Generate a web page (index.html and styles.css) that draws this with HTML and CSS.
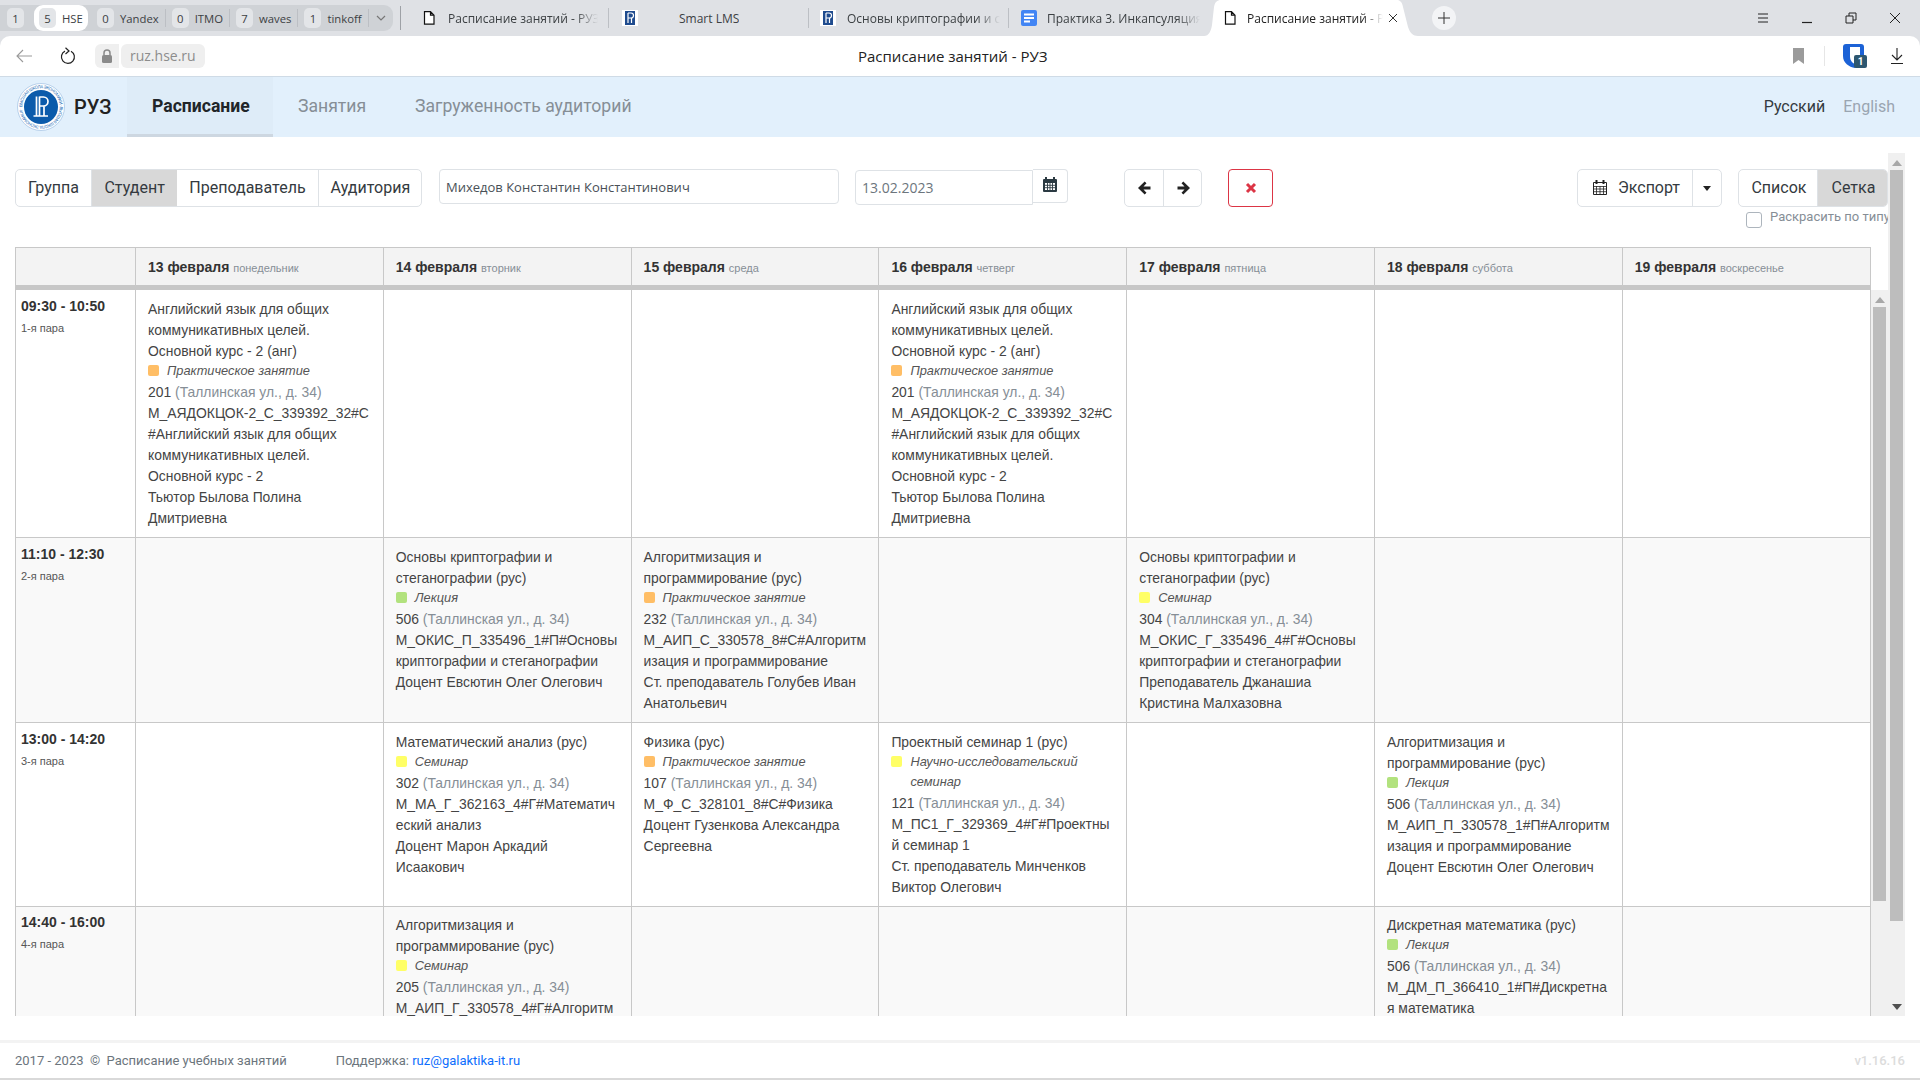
FILE: index.html
```html
<!DOCTYPE html>
<html lang="ru">
<head>
<meta charset="utf-8">
<title>Расписание занятий - РУЗ</title>
<link rel="stylesheet" href="styles.css">
</head>
<body>
<div class="tabstrip">
  <div class="groups">
    <span class="group g0"><b>1</b></span>
    <span class="group active"><b>5</b>HSE</span>
    <span class="group sep"><b>0</b>Yandex</span>
    <span class="group sep"><b>0</b>ITMO</span>
    <span class="group sep"><b>7</b>waves</span>
    <span class="group sep"><b>1</b>tinkoff</span>
    <svg class="chev" width="10" height="6" viewBox="0 0 10 6"><path d="M1 1l4 4 4-4" fill="none" stroke="#777" stroke-width="1.2"/></svg>
  </div>
  <i class="strip-sep"></i>
  <div class="tab t1">
    <svg class="page" width="12" height="14" viewBox="0 0 12 14"><path d="M1.5 .7h6l3.5 3.5v9H1.500zM7.500 .7v3.500H11" fill="#fff" stroke="#111" stroke-width="1.200"/></svg>
    <span class="title">Расписание занятий - РУЗ</span>
  </div>
  <div class="tab t2">
    <svg class="fav" width="16" height="16" viewBox="0 0 16 16"><rect width="16" height="16" fill="#fff"/><rect x="3" y="1" width="10" height="14" fill="#1f4b8e"/><path d="M6 3v10M6 3h3a2 2 0 010 5H6M9.500 8v5" fill="none" stroke="#fff" stroke-width="1.200"/></svg>
    <span class="title lms">Smart LMS</span>
  </div>
  <div class="tab t3">
    <svg class="fav" width="16" height="16" viewBox="0 0 16 16"><rect width="16" height="16" fill="#fff"/><rect x="3" y="1" width="10" height="14" fill="#1f4b8e"/><path d="M6 3v10M6 3h3a2 2 0 010 5H6M9.500 8v5" fill="none" stroke="#fff" stroke-width="1.200"/></svg>
    <span class="title">Основы криптографии и стеганографии</span>
  </div>
  <div class="tab t4">
    <svg class="fav" width="16" height="16" viewBox="0 0 16 16"><rect width="16" height="16" rx="2" fill="#4285f4"/><path d="M3 4.500h10M3 8h10M3 11.500h6" stroke="#fff" stroke-width="1.800"/></svg>
    <span class="title">Практика 3. Инкапсуляция классов</span>
  </div>
  <div class="tab current">
    <svg class="page" width="12" height="14" viewBox="0 0 12 14"><path d="M1.500 .7h6l3.500 3.500v9H1.500zM7.500 .7v3.500H11" fill="#fff" stroke="#111" stroke-width="1.200"/></svg>
    <span class="title">Расписание занятий - РУЗ</span>
    <svg class="x" width="10" height="10" viewBox="0 0 10 10"><path d="M1 1l8 8M9 1l-8 8" stroke="#333" stroke-width="1"/></svg>
  </div>
  <span class="plus"><svg width="12" height="12" viewBox="0 0 12 12"><path d="M6 0v12M0 6h12" stroke="#333" stroke-width="1"/></svg></span>
  <div class="winctl">
    <svg width="12" height="12" viewBox="0 0 12 12"><path d="M1 2h10M1 6h10M1 10h10" stroke="#222" stroke-width="1"/></svg>
    <svg width="12" height="12" viewBox="0 0 12 12"><path d="M1 10.500h10" stroke="#222" stroke-width="1.200"/></svg>
    <svg width="12" height="12" viewBox="0 0 12 12"><path d="M1 4h7v7H1zM4 4V1h7v7H8" fill="none" stroke="#222" stroke-width="1"/></svg>
    <svg width="12" height="12" viewBox="0 0 12 12"><path d="M1 1l10 10M11 1L1 11" stroke="#222" stroke-width="1"/></svg>
  </div>
</div>

<div class="addrbar">
  <svg class="back" width="16" height="14" viewBox="0 0 16 14"><path d="M16 7H1M7 1L1 7l6 6" fill="none" stroke="#9a9a9a" stroke-width="1.100"/></svg>
  <svg class="reload" width="16" height="18" viewBox="0 0 16 18"><path d="M11 4.200A6.500 6.500 0 1 1 5 4.100" fill="none" stroke="#222" stroke-width="1.200"/><path d="M5.500 .8l3.500 3.200-3.500 3" fill="none" stroke="#222" stroke-width="1.200"/></svg>
  <span class="lock"><svg width="12" height="14" viewBox="0 0 12 14"><path d="M3 6V4a3 3 0 016 0v2" fill="none" stroke="#8a8a8a" stroke-width="1.500"/><rect x="1" y="6" width="10" height="8" rx="1.500" fill="#8a8a8a"/></svg></span>
  <span class="url">ruz.hse.ru</span>
  <span class="pagetitle">Расписание занятий - РУЗ</span>
  <svg class="bookmark" width="11" height="16" viewBox="0 0 11 16"><path d="M0 0h11v16l-5.500-4L0 16z" fill="#9b9b9b"/></svg>
  <i class="bar-sep"></i>
  <span class="shield">
    <svg width="24" height="24" viewBox="0 0 24 24"><path d="M3 0h15a3 3 0 013 3v10c0 5-5 9-9 11C6 23 0 19 0 12V3a3 3 0 013-3z" fill="#1c62d6"/><path d="M7 3h10v10c0 3-2 5-5 7-3-1-5-4-5-7z" fill="#fff"/></svg>
    <em>1</em>
  </span>
  <svg class="download" width="14" height="16" viewBox="0 0 14 16"><path d="M7 0v12M2 7l5 5 5-5M1 15.500h12" fill="none" stroke="#222" stroke-width="1.100"/></svg>
</div>

<nav class="appnav">
  <a class="brand">
    <svg class="logo" width="48" height="48" viewBox="0 0 48 48">
      <defs><path id="ring" d="M24 24m-18.800 0a18.800 18.800 0 1 1 37.600 0a18.800 18.800 0 1 1-37.600 0"/></defs>
      <circle cx="24" cy="24" r="23.500" fill="#fff" stroke="#a9c6e6" stroke-width=".8"/>
      <text class="ringtext" textLength="116"><textPath href="#ring" textLength="116">ВЫСШАЯ ШКОЛА ЭКОНОМИКИ · ВЫСШАЯ ШКОЛА ЭКОНОМИКИ ·</textPath></text>
      <circle cx="24" cy="24" r="17" fill="#0b5bab"/>
      <path d="M19.500 13.500v19M22.500 13.500v19M22.500 14h4a4.500 4.500 0 010 9h-4M27 23v9.500M16.500 33h14.500" fill="none" stroke="#fff" stroke-width="1.700"/>
    </svg>
    <span>РУЗ</span>
  </a>
  <a class="navlink on">Расписание</a>
  <a class="navlink">Занятия</a>
  <a class="navlink">Загруженность аудиторий</a>
  <div class="langs"><a class="cur">Русский</a><a>English</a></div>
</nav>

<main class="main">
  <div class="column">
    <div class="controls">
      <div class="btngroup types">
        <span class="btn">Группа</span><span class="btn sel">Студент</span><span class="btn">Преподаватель</span><span class="btn">Аудитория</span>
      </div>
      <span class="field person">Михедов Константин Константинович</span>
      <div class="datebox">
        <span class="field date">13.02.2023</span>
        <span class="addon"><svg width="14" height="16" viewBox="0 0 14 16"><path d="M1 3h12a1 1 0 011 1v11a1 1 0 01-1 1H1a1 1 0 01-1-1V4a1 1 0 011-1z" fill="#2b3a42"/><path d="M3 1v3M11 1v3" stroke="#2b3a42" stroke-width="2"/><path d="M2 7h10v7H2z" fill="#fff"/><path d="M2 9.300h10M2 11.700h10M4.500 7v7M7 7v7M9.500 7v7" stroke="#2b3a42" stroke-width=".9"/></svg></span>
      </div>
      <div class="btngroup arrows">
        <span class="btn icon"><svg width="14" height="14" viewBox="0 0 14 14"><path d="M13.500 5.500H6.500L9.500 2.300 7.700.5 1 7l6.700 6.500 1.800-1.800-3-3.200h7z" fill="#222"/></svg></span>
        <span class="btn icon"><svg width="14" height="14" viewBox="0 0 14 14"><path d="M.5 5.500h7L4.500 2.300 6.300.5 13 7l-6.700 6.500-1.800-1.800 3-3.200h-7z" fill="#222"/></svg></span>
      </div>
      <span class="clear"><svg width="12" height="12" viewBox="0 0 12 12"><path d="M2 2l8 8M10 2l-8 8" stroke="#dc3545" stroke-width="3"/></svg></span>
      <div class="btngroup export">
        <span class="btn exp"><svg width="14" height="15" viewBox="0 0 14 15"><path d="M.5 2.500h13v12H.5z" fill="none" stroke="#222"/><path d="M.5 6.500h13M.5 9h13M.5 11.700h13M3.500 6v8M7 6v8M10.500 6v8" stroke="#222" stroke-width=".8"/><path d="M3.500 0v4M10.500 0v4" stroke="#222" stroke-width="2"/></svg>Экспорт</span>
        <span class="btn caret"><i></i></span>
      </div>
      <div class="viewbox">
        <div class="btngroup">
          <span class="btn">Список</span><span class="btn sel">Сетка</span>
        </div>
        <label class="colorize"><i class="check"></i><span>Раскрасить по типу</span></label>
      </div>
    </div>

    <div class="thead">
      <div class="th"></div>
      <div class="th"><b>13 февраля</b> <small>понедельник</small></div>
      <div class="th"><b>14 февраля</b> <small>вторник</small></div>
      <div class="th"><b>15 февраля</b> <small>среда</small></div>
      <div class="th"><b>16 февраля</b> <small>четверг</small></div>
      <div class="th"><b>17 февраля</b> <small>пятница</small></div>
      <div class="th"><b>18 февраля</b> <small>суббота</small></div>
      <div class="th"><b>19 февраля</b> <small>воскресенье</small></div>
    </div>

    <div class="tbodywrap">
      <div class="tbody">
        <!-- row 1 -->
        <div class="td time"><b>09:30 - 10:50</b><small>1-я пара</small></div>
        <div class="td">
          <p>Английский язык для общих<br>коммуникативных целей.<br>Основной курс - 2 (анг)</p>
          <p class="kind"><i class="sw prac"></i>Практическое занятие</p>
          <p>201 <span class="addr">(Таллинская ул., д. 34)</span></p>
          <p>М_АЯДОКЦОК-2_С_339392_32#С<br>#Английский язык для общих<br>коммуникативных целей.<br>Основной курс - 2</p>
          <p>Тьютор Былова Полина<br>Дмитриевна</p>
        </div>
        <div class="td"></div>
        <div class="td"></div>
        <div class="td">
          <p>Английский язык для общих<br>коммуникативных целей.<br>Основной курс - 2 (анг)</p>
          <p class="kind"><i class="sw prac"></i>Практическое занятие</p>
          <p>201 <span class="addr">(Таллинская ул., д. 34)</span></p>
          <p>М_АЯДОКЦОК-2_С_339392_32#С<br>#Английский язык для общих<br>коммуникативных целей.<br>Основной курс - 2</p>
          <p>Тьютор Былова Полина<br>Дмитриевна</p>
        </div>
        <div class="td"></div>
        <div class="td"></div>
        <div class="td"></div>
        <!-- row 2 -->
        <div class="td time alt"><b>11:10 - 12:30</b><small>2-я пара</small></div>
        <div class="td alt"></div>
        <div class="td alt">
          <p>Основы криптографии и<br>стеганографии (рус)</p>
          <p class="kind"><i class="sw lect"></i>Лекция</p>
          <p>506 <span class="addr">(Таллинская ул., д. 34)</span></p>
          <p>М_ОКИС_П_335496_1#П#Основы<br>криптографии и стеганографии</p>
          <p>Доцент Евсютин Олег Олегович</p>
        </div>
        <div class="td alt">
          <p>Алгоритмизация и<br>программирование (рус)</p>
          <p class="kind"><i class="sw prac"></i>Практическое занятие</p>
          <p>232 <span class="addr">(Таллинская ул., д. 34)</span></p>
          <p>М_АИП_С_330578_8#С#Алгоритм<br>изация и программирование</p>
          <p>Ст. преподаватель Голубев Иван<br>Анатольевич</p>
        </div>
        <div class="td alt"></div>
        <div class="td alt">
          <p>Основы криптографии и<br>стеганографии (рус)</p>
          <p class="kind"><i class="sw semi"></i>Семинар</p>
          <p>304 <span class="addr">(Таллинская ул., д. 34)</span></p>
          <p>М_ОКИС_Г_335496_4#Г#Основы<br>криптографии и стеганографии</p>
          <p>Преподаватель Джанашиа<br>Кристина Малхазовна</p>
        </div>
        <div class="td alt"></div>
        <div class="td alt"></div>
        <!-- row 3 -->
        <div class="td time"><b>13:00 - 14:20</b><small>3-я пара</small></div>
        <div class="td"></div>
        <div class="td">
          <p>Математический анализ (рус)</p>
          <p class="kind"><i class="sw semi"></i>Семинар</p>
          <p>302 <span class="addr">(Таллинская ул., д. 34)</span></p>
          <p>М_МА_Г_362163_4#Г#Математич<br>еский анализ</p>
          <p>Доцент Марон Аркадий<br>Исаакович</p>
        </div>
        <div class="td">
          <p>Физика (рус)</p>
          <p class="kind"><i class="sw prac"></i>Практическое занятие</p>
          <p>107 <span class="addr">(Таллинская ул., д. 34)</span></p>
          <p>М_Ф_С_328101_8#С#Физика</p>
          <p>Доцент Гузенкова Александра<br>Сергеевна</p>
        </div>
        <div class="td">
          <p>Проектный семинар 1 (рус)</p>
          <p class="kind"><i class="sw semi"></i>Научно-исследовательский<br>семинар</p>
          <p>121 <span class="addr">(Таллинская ул., д. 34)</span></p>
          <p>М_ПС1_Г_329369_4#Г#Проектны<br>й семинар 1</p>
          <p>Ст. преподаватель Минченков<br>Виктор Олегович</p>
        </div>
        <div class="td"></div>
        <div class="td">
          <p>Алгоритмизация и<br>программирование (рус)</p>
          <p class="kind"><i class="sw lect"></i>Лекция</p>
          <p>506 <span class="addr">(Таллинская ул., д. 34)</span></p>
          <p>М_АИП_П_330578_1#П#Алгоритм<br>изация и программирование</p>
          <p>Доцент Евсютин Олег Олегович</p>
        </div>
        <div class="td"></div>
        <!-- row 4 -->
        <div class="td time alt r4"><b>14:40 - 16:00</b><small>4-я пара</small></div>
        <div class="td alt r4"></div>
        <div class="td alt r4">
          <p>Алгоритмизация и<br>программирование (рус)</p>
          <p class="kind"><i class="sw semi"></i>Семинар</p>
          <p>205 <span class="addr">(Таллинская ул., д. 34)</span></p>
          <p>М_АИП_Г_330578_4#Г#Алгоритм<br>изация и программирование</p>
        </div>
        <div class="td alt r4"></div>
        <div class="td alt r4"></div>
        <div class="td alt r4"></div>
        <div class="td alt r4">
          <p>Дискретная математика (рус)</p>
          <p class="kind"><i class="sw lect"></i>Лекция</p>
          <p>506 <span class="addr">(Таллинская ул., д. 34)</span></p>
          <p>М_ДМ_П_366410_1#П#Дискретна<br>я математика</p>
          <p>Доцент Евсютин Олег Олегович</p>
        </div>
        <div class="td alt r4"></div>
      </div>
      <div class="scrollbar inner">
        <svg class="arrow" width="10" height="6" viewBox="0 0 10 6"><path d="M5 0l5 6H0z" fill="#a8a8a8"/></svg>
        <div class="thumb"></div>
      </div>
    </div>
  </div>
  <div class="scrollbar outer">
    <svg class="arrow" width="10" height="6" viewBox="0 0 10 6"><path d="M5 0l5 6H0z" fill="#a8a8a8"/></svg>
    <div class="thumb"></div>
    <svg class="arrow down" width="10" height="6" viewBox="0 0 10 6"><path d="M0 0h10L5 6z" fill="#505050"/></svg>
  </div>
</main>

<footer class="footer">
  <span class="copy">2017 - 2023 &nbsp;©&nbsp; Расписание учебных занятий</span>
  <span class="support">Поддержка: <a>ruz@galaktika-it.ru</a></span>
  <span class="version">v1.16.16</span>
</footer>
</body>
</html>
```

FILE: styles.css
```css
* { box-sizing: border-box; }
html, body { margin: 0; height: 100%; }
body {
  width: 1920px; height: 1080px; overflow: hidden;
  display: flex; flex-direction: column;
  font-family: Roboto, "Liberation Sans", sans-serif;
  color: #212529; background: #dfe1e5;
}
p { margin: 0; }

/* browser tabs */
.tabstrip {
  height: 36px; flex: none; display: flex; align-items: center;
  background: #dfe1e5; font-family: "Open Sans", sans-serif; font-size: 12px; color: #3c4043;
}
.groups {
  width: 393px; height: 26px; flex: none; display: flex; align-items: center;
  background: #cfd2d6; border-radius: 0 9px 9px 0; font-size: 11.300px;
  position: relative;
}
.group { display: flex; align-items: center; height: 26px; white-space: nowrap; }
.group b {
  font-weight: 400; width: 17px; height: 20px; border-radius: 5px; background: #e3e5e8;
  display: flex; align-items: center; justify-content: center; margin-right: 6px;
}
.g0 { width: 34px; padding-left: 7px; }
.group.active { width: 54px; background: #fff; border-radius: 9px; padding-left: 5px; }
.group.sep { padding-right: 7px; margin-left: 6px; position: relative; }
.group.sep::after { content: ""; position: absolute; right: 0; top: 4px; bottom: 4px; width: 1px; background: #bcbfc4; }
.group.active + .group.sep { margin-left: 9px; }
.chev { margin-left: 7px; }
.strip-sep { width: 1px; height: 24px; background: #9ea1a6; margin-left: 7px; flex: none; }
.tab {
  height: 36px; flex: none; display: flex; align-items: center; position: relative; white-space: nowrap;
}
.tab .title { overflow: hidden; -webkit-mask-image: linear-gradient(90deg, #000 85%, transparent); mask-image: linear-gradient(90deg, #000 85%, transparent); }
.tab::after { content: ""; position: absolute; right: 0; top: 8px; bottom: 8px; width: 1px; background: #bcbfc4; }
.t1 { width: 208px; padding-left: 22px; }
.t1 .title { margin-left: 13px; width: 150px; }
.t2 { width: 200px; padding-left: 13px; }
.t2 .title { margin-left: 41px; -webkit-mask-image: none; mask-image: none; }
.t3 { width: 200px; padding-left: 11px; }
.t3 .title { margin-left: 11px; width: 153px; }
.t4 { width: 195px; padding-left: 12px; }
.t4 .title { margin-left: 10px; width: 153px; }
.t4::after { display: none; }
.tab.current {
  width: 214px; background: #fff; padding-left: 20px; color: #222;
  clip-path: path("M0 36C5 36 7 31 8 25L10 7C11 2 13 0 17 0H193C196 0 198 2 199 7L204 27C206 33 209 36 214 36Z");
}
.tab.current::after { display: none; }
.current .title { margin-left: 11px; width: 136px; }
.current .x { margin-left: 5px; }
.plus {
  width: 24px; height: 24px; border-radius: 50%; background: #f3f4f6; margin-left: 14px;
  display: flex; align-items: center; justify-content: center; flex: none;
}
.winctl { margin-left: auto; display: flex; gap: 32px; padding-right: 19px; }

/* address bar */
.addrbar {
  height: 41px; flex: none; display: flex; align-items: center; position: relative;
  background: #fff; border-bottom: 1px solid #cfdbe6; border-radius: 10px 10px 0 0;
  font-family: "Open Sans", sans-serif; font-size: 14px;
  padding-bottom: 1px;
}
.back { margin-left: 16px; }
.reload { margin-left: 28px; }
.lock { width: 24px; height: 24px; background: #efefef; border-radius: 6px 0 0 6px; margin-left: 19px; display: flex; align-items: center; justify-content: center; }
.url { height: 24px; line-height: 24px; background: #efefef; border-radius: 6px; margin-left: 2px; padding: 0 9px 0 9px; color: #8c8c8c; font-size: 14px; }
.pagetitle { position: absolute; left: 858px; top: 8px; color: #222; font-size: 15px; line-height: 24px; }
.bookmark { margin-left: auto; }
.bar-sep { width: 1px; height: 20px; background: #e6e6e6; margin-left: 20px; }
.shield { position: relative; width: 24px; height: 24px; margin-left: 18px; }
.shield em {
  position: absolute; right: 0; bottom: 0; width: 13px; height: 13px; background: #2d5770; border-radius: 2px;
  color: #fff; font: 700 10px/13px Roboto, sans-serif; text-align: center;
}
.download { margin: 0 16px 0 23px; }

/* app navigation */
.appnav {
  height: 60px; flex: none; display: flex; align-items: stretch; background: #e2f0fc; position: relative;
}
.brand { width: 127px; display: flex; align-items: center; padding-left: 17px; font-size: 20px; font-weight: 500; color: #222; }
.logo { flex: none; margin-right: 9px; }
.ringtext { font: 4.300px Roboto, sans-serif; fill: #2a6fb8; }
.navlink {
  padding: 0 24px 3px 25px; display: flex; align-items: center; font-size: 17.600px; color: #868e96;
}
.navlink.on { width: 146px; background: #deecf8; color: #212529; font-weight: 700; border-bottom: 3px solid #cdd7e1; padding: 0 0 0 25px; }
.langs { margin-left: auto; display: flex; align-items: center; gap: 18px; padding: 0 25px 2px 0; font-size: 16px; color: #9aa5b1; }
.langs .cur { color: #343a40; }

/* main */
.main { flex: 1; display: flex; padding: 16px 15px 24px 15px; min-height: 0; background: #fff; }
.column { width: 1873px; display: flex; flex-direction: column; min-height: 0; padding-top: 16px; }
.controls { display: flex; align-items: flex-start; height: 78px; flex: none; font-size: 16px; }
.btngroup { display: flex; border: 1px solid #dee2e6; border-radius: 5px; height: 38px; overflow: hidden; }
.btn { display: flex; align-items: center; justify-content: center; height: 36px; border-right: 1px solid #dee2e6; padding: 0 12px 1px; color: #343a40; white-space: nowrap; }
.btn:last-child { border-right: 0; }
.btn.sel { background: #d8d8d8; border-right: 0; padding: 0 12.500px 1px; }
.types { width: 407px; }
.field {
  display: flex; align-items: center; border: 1px solid #dee2e6; border-radius: 4px; height: 35px; padding-left: 6px;
  font-family: "Open Sans", sans-serif; font-size: 13px; color: #495057; background: #fff;
}
.person { width: 400px; margin-left: 17px; }
.datebox { display: flex; margin-left: 16px; }
.date { width: 178px; height: 35px; margin-top: 1px; border-radius: 4px 0 0 4px; font-size: 14px; color: #6c757d; }
.addon { width: 35px; height: 34px; border: 1px solid #dee2e6; border-left: 0; border-radius: 0 4px 4px 0; display: flex; align-items: center; justify-content: center; padding-bottom: 4px; }
.arrows { margin-left: 56px; width: 78px; }
.btn.icon { width: 39px; padding: 0; flex: none; }
.clear { width: 45px; height: 38px; margin-left: 26px; border: 1px solid #dc3545; border-radius: 4px; display: flex; align-items: center; justify-content: center; }
.export { margin-left: auto; width: 145px; }
.btn.exp { width: 115px; padding: 0 0 1px 3px; gap: 11px; flex: none; }
.btn.caret { flex: 1; padding: 0; }
.caret i { border: 4px solid transparent; border-top: 5px solid #222; border-bottom: 0; }
.viewbox { margin-left: 16px; width: 150px; position: relative; }
.viewbox .btngroup { width: 150px; }
.viewbox .btn { width: 80px; padding: 0 0 1px 2px; }
.viewbox .btn.sel { width: 70px; }
.colorize { display: flex; align-items: flex-start; gap: 8px; margin: 2px 0 0 8px; font-size: 13px; color: #868e96; white-space: nowrap; overflow: hidden; width: 142px; height: 20px; }
.check { width: 16px; height: 16px; border: 1px solid #adb5bd; border-radius: 3px; flex: none; margin-top: 3px; background: #fff; }

/* table */
.thead { display: grid; grid-template-columns: 120px repeat(6, 247.800px) 1fr; width: 1856px; height: 43px; flex: none;
  border-top: 1px solid #c8c8c8; border-bottom: 5px solid #c7c7c7; background: #f3f3f3; font-family: "Liberation Sans", sans-serif; }
.th { border-left: 1px solid #c8c8c8; padding-left: 12px; line-height: 38px; white-space: nowrap; font-size: 14px; color: #333; }
.th:last-child { border-right: 1px solid #c8c8c8; }
.th small { font-size: 11px; color: #868e96; }
.tbodywrap { flex: 1; display: flex; min-height: 0; overflow: hidden; }
.tbody { width: 1856px; flex: none; display: grid; grid-template-columns: 120px repeat(6, 247.800px) 1fr; align-content: start; font-family: "Liberation Sans", sans-serif; font-size: 13.900px; line-height: 21px; color: #444; }
.td { border-left: 1px solid #c8c8c8; border-bottom: 1px solid #c8c8c8; padding: 9px 5px 8px 12px; white-space: nowrap; }
.td:nth-child(8n) { border-right: 1px solid #c8c8c8; }
.td.alt { background: #f9f9f9; }
.td.time { padding: 6px 0 0 5px; color: #333; line-height: 20px; font-size: 14px; }
.td.time b { display: block; }
.td.time small { display: block; font-size: 11px; margin-top: 2px; color: #555; }
.td.r4 { padding-top: 8px; }
.td.time.r4 { padding-top: 5px; }
.kind { font-style: italic; font-size: 12.800px; line-height: 20px; padding-left: 19px; position: relative; color: #555; top: -1px; }
.sw { position: absolute; left: 0; top: 4px; width: 11px; height: 11px; border-radius: 2px; }
.sw.prac { background: #ffbe66; }
.sw.lect { background: #b2e27e; }
.sw.semi { background: #ffff66; }
.addr { color: #868e96; }

/* scrollbars */
.scrollbar { background: #f0f0f0; display: flex; flex-direction: column; align-items: center; flex: none; width: 17px; }
.scrollbar .arrow { margin-top: 7px; flex: none; }
.thumb { width: 13px; background: #bdbdbd; }
.inner { height: 100%; }
.inner .thumb { height: 594px; margin-top: 4px; }
.outer .thumb { height: 751px; margin-top: 4px; }
.outer .arrow.down { margin-top: auto; margin-bottom: 6px; }

/* footer */
.footer { height: 40px; flex: none; display: flex; align-items: center; border-top: 3px solid #f3f3f3; border-bottom: 2px solid #d9d9d9; padding: 0 15px; font-size: 13px; color: #6c757d; background: #fff; }
.support { margin-left: 49px; }
.support a { color: #0d6efd; }
.version { margin-left: auto; color: #dcdcdc; font-weight: 500; }
```
